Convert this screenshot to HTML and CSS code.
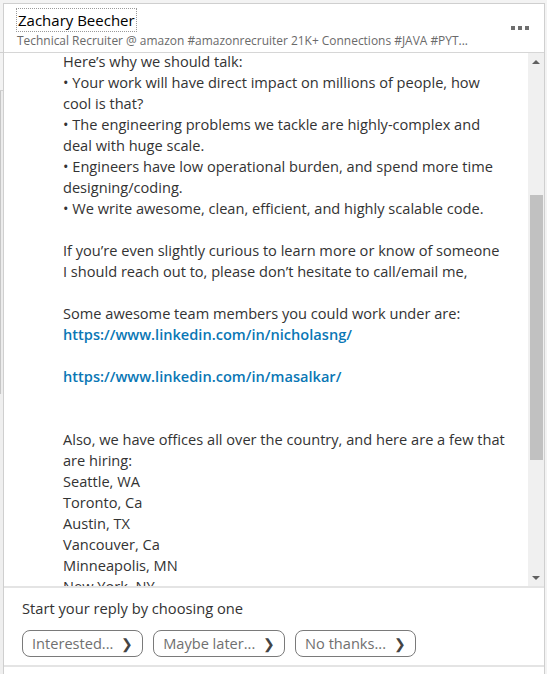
FILE: index.html
```html
<!DOCTYPE html>
<html>
<head>
<meta charset="utf-8">
<link rel="stylesheet" href="styles.css">
</head>
<body>
<div class="page">
  <div class="backstrip">
    <div class="bs-top"></div>
    <div class="bs-bar"></div>
    <div class="bs-rest"></div>
  </div>
  <div class="panel">
    <header class="head">
      <div class="who">
        <div class="name">Zachary Beecher</div>
        <div class="headline">Technical Recruiter @ amazon #amazonrecruiter 21K+ Connections #JAVA #PYT...</div>
      </div>
      <div class="more"><span></span><span></span><span></span></div>
    </header>
    <div class="body">
      <div class="msg">
        <p>Here’s why we should talk:<br>
        • Your work will have direct impact on millions of people, how<br>
        cool is that?<br>
        • The engineering problems we tackle are highly-complex and<br>
        deal with huge scale.<br>
        • Engineers have low operational burden, and spend more time<br>
        designing/coding.<br>
        • We write awesome, clean, efficient, and highly scalable code.</p>
        <p class="gap">If you’re even slightly curious to learn more or know of someone<br>
        I should reach out to, please don’t hesitate to call/email me,</p>
        <p class="gap">Some awesome team members you could work under are:<br>
        <a class="link">https://www.linkedin.com/in/nicholasng/</a></p>
        <p class="gap"><a class="link">https://www.linkedin.com/in/masalkar/</a></p>
        <p class="gap2">Also, we have offices all over the country, and here are a few that<br>
        are hiring:<br>
        Seattle, WA<br>
        Toronto, Ca<br>
        Austin, TX<br>
        Vancouver, Ca<br>
        Minneapolis, MN<br>
        New York, NY</p>
      </div>
      <div class="scrollbar">
        <div class="arrow up"></div>
        <div class="sp1"></div>
        <div class="thumb"></div>
        <div class="sp2"></div>
        <div class="arrow down"></div>
      </div>
    </div>
    <div class="reply">
      <div class="prompt">Start your reply by choosing one</div>
      <div class="choices">
        <button class="chip">Interested... <span class="chev">❯</span></button>
        <button class="chip">Maybe later... <span class="chev">❯</span></button>
        <button class="chip">No thanks... <span class="chev">❯</span></button>
      </div>
    </div>
    <div class="under"></div>
  </div>
</div>
</body>
</html>
```

FILE: styles.css
```css
html, body {
  margin: 0;
  padding: 0;
  background: #f3f3f3;
  height: 674px;
  overflow: hidden;
}
.page {
  display: flex;
  height: 674px;
  font-family: "Open Sans", "Noto Sans", sans-serif;
}
.backstrip {
  width: 3px;
  display: flex;
  flex-direction: column;
}
.bs-top {
  height: 52px;
  border-bottom: 1px solid #d0d0d0;
  background: #f3f3f3;
}
.bs-bar {
  margin-top: 37px;
  height: 303px;
  border-top: 1px solid #d0d0d0;
  background: linear-gradient(to right, #c6c6c6 0, #c6c6c6 1px, #ececec 1px);
}
.bs-rest {
  flex: 1;
  background: #efefef;
}
.panel {
  margin-top: 3px;
  width: 540px;
  border: 1px solid #cfcfcf;
  border-bottom: none;
  background: #fff;
  display: flex;
  flex-direction: column;
}
.head {
  height: 48px;
  border-bottom: 1px solid #d6d6d6;
  display: flex;
  align-items: flex-start;
  justify-content: space-between;
}
.who {
  padding: 5px 0 0 13px;
}
.name {
  display: inline-block;
  font-size: 15px;
  line-height: 22px;
  color: #000;
  outline: 1px dotted #9a9a9a;
  padding: 0 1px 0 1px;
}
.headline {
  font-size: 11.95px;
  line-height: 18px;
  color: #6a6a6a;
  margin-top: 1px;
  white-space: nowrap;
}
.more {
  display: flex;
  gap: 3px;
  margin: 22px 15px 0 0;
}
.more span {
  width: 4px;
  height: 4px;
  background: #6e6e6e;
}
.body {
  height: 533px;
  display: flex;
  overflow: hidden;
}
.msg {
  flex: 1;
  margin-top: -2px;
  padding: 0 0 0 59px;
  font-size: 14.6px;
  line-height: 21px;
  color: #333;
  overflow: hidden;
  white-space: nowrap;
}
.msg p { margin: 0; }
.msg .gap { margin-top: 21px; }
.msg .gap2 { margin-top: 42px; }
.link {
  color: #0a77b5;
  font-weight: 600;
}
.scrollbar {
  width: 16px;
  background: #f0f0f0;
  display: flex;
  flex-direction: column;
  align-items: center;
}
.arrow {
  height: 17px;
  width: 16px;
  display: flex;
  align-items: center;
  justify-content: center;
}
.arrow::before {
  content: "";
  border-left: 4px solid transparent;
  border-right: 4px solid transparent;
}
.arrow.up::before { border-bottom: 4px solid #606060; }
.arrow.down::before { border-top: 4px solid #606060; }
.sp1 { height: 125px; }
.thumb {
  width: 13px;
  height: 265px;
  background: #c1c1c1;
}
.sp2 { flex: 1; }
.reply {
  height: 77px;
  border-top: 2px solid #e4e4e4;
  border-bottom: 2px solid #e4e4e4;
  padding: 0 0 0 18px;
}
.prompt {
  font-size: 14.7px;
  line-height: 20px;
  color: #333;
  margin-top: 10px;
}
.choices {
  display: flex;
  gap: 10px;
  margin-top: 12px;
}
.chip {
  font-family: "Open Sans", "Noto Sans", sans-serif;
  font-size: 14.6px;
  color: #707070;
  background: #fff;
  border: 1px solid #7a7a7a;
  border-radius: 8px;
  height: 27px;
  padding: 0 9px;
  line-height: 25px;
}
.chev {
  font-size: 14px;
  color: #444;
  margin-left: 4px;
}
.under {
  flex: 1;
  background: #fff;
}
```
